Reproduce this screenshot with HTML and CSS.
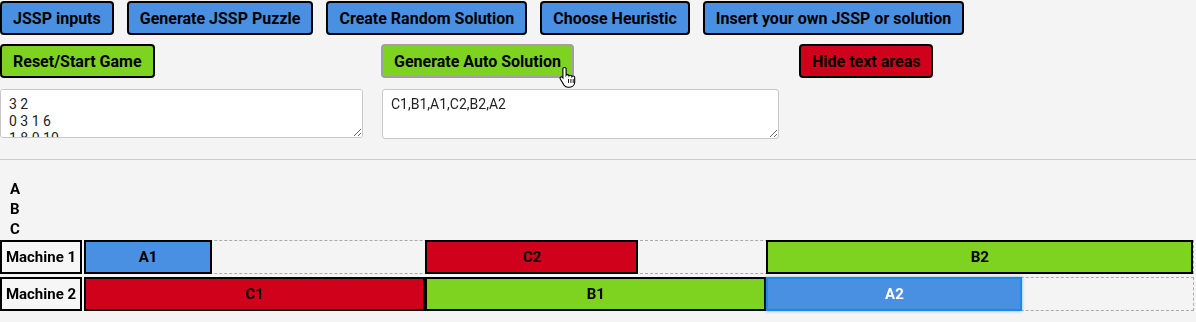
FILE: index.html
```html
<html>
  <head>
    <title>JSSP Game</title>
    <link rel="stylesheet" href="styles.css">
  </head>
  <body>
    <div class="toolbar">
        <button class="btn blue">JSSP inputs</button>
        <button class="btn blue">Generate JSSP Puzzle</button>
        <button class="btn blue">Create Random Solution</button>
        <button class="btn blue">Choose Heuristic</button>
        <button class="btn blue">Insert your own JSSP or solution</button>
    </div>
    <div class="controls">
        <div><button class="btn green">Reset/Start Game</button></div>
        <div class="hover-wrap">
            <button class="btn green hover">Generate Auto Solution</button>
            <svg class="cursor" width="18" height="22" viewBox="0 0 18 22">
                <path d="M5.5 1.5c1 0 1.6.7 1.6 1.6v6.2c.3-.5.8-.7 1.4-.7.9 0 1.4.6 1.5 1.3.3-.5.8-.7 1.4-.7.9 0 1.5.6 1.5 1.4.3-.4.8-.6 1.3-.6.9 0 1.5.7 1.5 1.6v4.4c0 3-2.2 5.2-5.2 5.2H9c-1.7 0-3-.7-4-2.1L1.3 13c-.5-.7-.3-1.5.3-1.9.6-.4 1.4-.3 1.9.3l.4.5V3.1c0-.9.6-1.6 1.6-1.6z" fill="#fff" stroke="#000" stroke-width="1.1"/>
                <path d="M9.5 13v4M11.9 13v4M14.2 13v4" stroke="#000" stroke-width="0.9"/>
            </svg>
        </div>
        <div><button class="btn red">Hide text areas</button></div>
    </div>
    <div class="inputs">
        <textarea class="input-left">3 2
0 3 1 6
1 8 0 10
1 8 0 5</textarea>
        <textarea class="input-right">C1,B1,A1,C2,B2,A2</textarea>
    </div>
    <hr class="divider">
    <div class="jobs">
        <div>A</div>
        <div>B</div>
        <div>C</div>
    </div>
    <div class="gantt">
        <div class="gantt-row">
            <div class="machine">Machine 1</div>
            <div class="track">
                <div class="op blue" style="left: 0%; width: 11.538%">A1</div>
                <div class="op red" style="left: 30.769%; width: 19.231%">C2</div>
                <div class="op green" style="left: 61.538%; width: 38.462%">B2</div>
            </div>
        </div>
        <div class="gantt-row">
            <div class="machine">Machine 2</div>
            <div class="track">
                <div class="op red" style="left: 0%; width: 30.769%">C1</div>
                <div class="op green" style="left: 30.769%; width: 30.769%">B1</div>
                <div class="op blue selected" style="left: 61.538%; width: 23.077%">A2</div>
            </div>
        </div>
    </div>
  </body>
</html>
```

FILE: styles.css
```css
html, body {
    margin: 0;
    padding: 0;
    background: #f4f4f4;
    font-family: Roboto, "Liberation Sans", sans-serif;
    color: #000;
}
.btn {
    box-sizing: border-box;
    height: 34px;
    padding: 0 11px;
    border: 2px solid #000;
    border-radius: 4px;
    font: bold 16px Roboto, "Liberation Sans", sans-serif;
    color: #000;
    cursor: pointer;
}
.blue {
    background: #4a90e2;
}
.green {
    background: #7ed321;
}
.red {
    background: #d0021b;
}
.btn.hover {
    border-color: #a0a0a0;
}
.toolbar {
    display: flex;
    gap: 13px;
    padding-top: 1px;
}
.controls {
    display: grid;
    grid-template-columns: 381px 418px auto;
    margin-top: 9px;
}
.hover-wrap {
    position: relative;
}
.cursor {
    position: absolute;
    left: 178px;
    top: 22px;
}
.inputs {
    display: grid;
    grid-template-columns: 382px auto;
    margin-top: 11px;
}
textarea {
    box-sizing: border-box;
    height: 49px;
    padding: 6px 8px;
    border: 1px solid #c8c8c8;
    border-radius: 3px;
    background: #fff;
    font: 14px/17px Roboto, "Liberation Sans", sans-serif;
    color: #222;
}
.input-left {
    width: 363px;
}
.input-right {
    width: 397px;
    height: 50px;
}
.divider {
    border: 0;
    border-top: 1px solid #cbcbcb;
    margin: 20px 0 0 0;
}
.jobs {
    padding: 19px 0 0 10px;
    font-weight: bold;
    font-size: 15px;
    line-height: 20px;
}
.gantt {
    display: flex;
    flex-direction: column;
    gap: 3px;
    margin-top: 1px;
}
.gantt-row {
    display: flex;
    gap: 2px;
    height: 34px;
    margin-right: 2px;
}
.machine {
    box-sizing: border-box;
    width: 82px;
    border: 2px solid #000;
    background: #f6f6f6;
    font-weight: bold;
    font-size: 15px;
    line-height: 30px;
    text-align: center;
    white-space: nowrap;
}
.track {
    position: relative;
    flex: 1;
    box-sizing: border-box;
    border: 1px dashed #aaa;
    border-left: 0;
}
.op {
    position: absolute;
    top: -1px;
    bottom: -1px;
    box-sizing: border-box;
    border: 2px solid #000;
    font-weight: bold;
    font-size: 15px;
    line-height: 30px;
    text-align: center;
}
.op.selected {
    border-color: #1e88e5;
    color: #fff;
    box-shadow: 0 0 3px rgba(30, 136, 229, 0.6);
}
```
